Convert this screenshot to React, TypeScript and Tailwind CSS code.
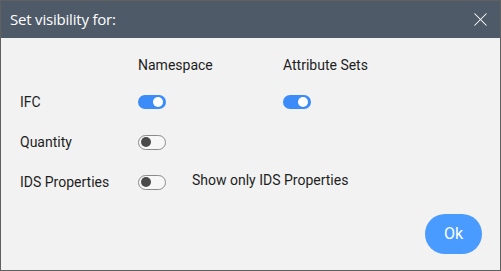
import { X } from "lucide-react";

function Toggle({ on }: { on: boolean }) {
  if (on) {
    return (
      <span className="relative inline-flex h-[14px] w-[28px] items-center rounded-full bg-[#3b8bf8]">
        <span className="absolute right-[3px] h-[10px] w-[10px] rounded-full bg-white" />
      </span>
    );
  }
  return (
    <span className="relative inline-flex h-[15px] w-[28px] items-center rounded-full border border-[#8a8a8a] bg-[#f7f7f7]">
      <span className="absolute left-[2px] h-[10px] w-[10px] rounded-full bg-[#4a4a4a]" />
    </span>
  );
}

export default function App() {
  return (
    <div className="flex h-[271px] w-[501px] flex-col border border-[#606060] bg-[#f2f2f2] font-['Roboto',sans-serif] text-[14px] text-[#1e1e1e]">
      <div className="flex h-[37px] shrink-0 items-center justify-between bg-[#4f5a68] pl-[9px] pr-[8px]">
        <span className="font-['Open_Sans',sans-serif] text-[15px] text-white tracking-[-0.2px]">Set visibility for:</span>
        <X className="h-[23px] w-[23px] text-white" strokeWidth={1.1} />
      </div>

      <div className="grid grid-cols-[118px_145px_1fr] grid-rows-[20px_40px_40px_40px] pl-[19px] pt-[17px]">
        <div />
        <div className="flex items-center">Namespace</div>
        <div className="flex items-center">Attribute Sets</div>

        <div className="mt-[14px] flex items-center">IFC</div>
        <div className="mt-[14px] flex items-center"><Toggle on /></div>
        <div className="mt-[14px] flex items-center"><Toggle on /></div>

        <div className="mt-[14px] flex items-center">Quantity</div>
        <div className="mt-[14px] flex items-center"><Toggle on={false} /></div>
        <div className="mt-[14px]" />

        <div className="mt-[14px] flex items-center">IDS Properties</div>
        <div className="col-span-2 mt-[14px] flex items-center gap-[26px]">
          <Toggle on={false} />
          <span className="-mt-[3px]">Show only IDS Properties</span>
        </div>
      </div>

      <div className="mt-auto flex justify-end pb-[16px] pr-[18px]">
        <button className="h-[40px] w-[57px] rounded-full bg-[#4a9bff] text-[16px] text-white">Ok</button>
      </div>
    </div>
  );
}
